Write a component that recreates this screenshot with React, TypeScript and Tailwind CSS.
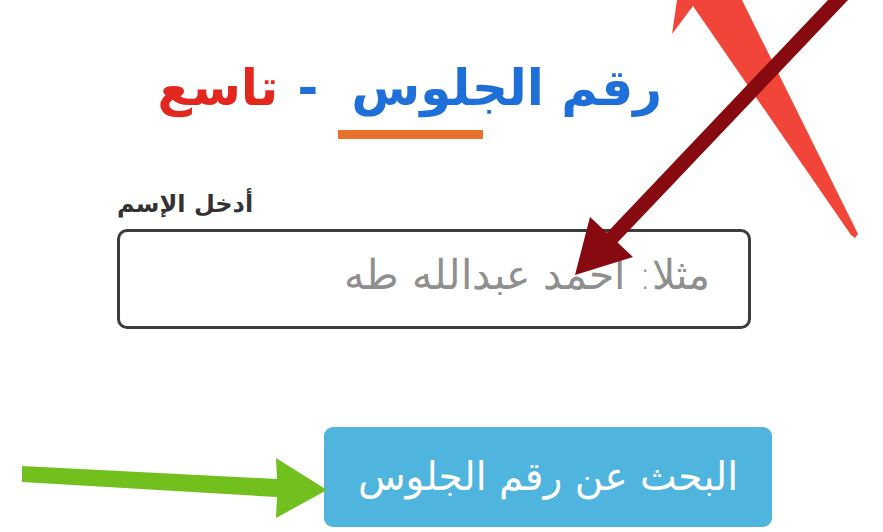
import React from "react";

const font = { fontFamily: '"DejaVu Sans", sans-serif' };

export default function App() {
  return (
    <div
      className="relative w-[883px] h-[532px] overflow-hidden bg-white"
      style={font}
    >
      <div className="flex flex-col">
        {/* Title */}
        <div className="flex justify-end pr-[221px] pt-[56px]">
          <h1
            dir="rtl"
            className="flex items-center text-[50px] font-bold leading-[64px] tracking-[3px]"
          >
            <span className="text-[#1f6fd8]">رقم الجلوس</span>
            <span className="mr-[30px] text-[#1f6fd8]">-</span>
            <span className="mr-[19px] text-[#e2281e]">تاسع</span>
          </h1>
        </div>
        <div className="ml-[338px] mt-[10px] h-[9px] w-[145px] bg-[#e8702a]" />

        {/* Label + input */}
        <div className="ml-[117px] mt-[50px] flex w-[634px] flex-col">
          <label className="text-[24px] font-bold leading-[30px] text-[#333333]">
            أدخل الإسم
          </label>
          <div className="mt-[10px] flex h-[100px] items-center justify-end rounded-[10px] border-[3px] border-[#3c3c3c] pb-[6px] pr-[38px]">
            <span dir="rtl" className="text-[41px] font-light text-[#8f8f8f]">
              مثلا: احمد عبدالله طه
            </span>
          </div>
        </div>

        {/* Button */}
        <div className="ml-[324px] mt-[98px]">
          <button className="flex h-[100px] w-[448px] items-center justify-center rounded-[9px] bg-[#4fb4de] text-[39px] text-white">
            <span dir="rtl">البحث عن رقم الجلوس</span>
          </button>
        </div>
      </div>

      {/* Annotation arrows overlay */}
      <svg
        className="pointer-events-none absolute left-0 top-0"
        width="883"
        height="532"
        viewBox="0 0 883 532"
      >
        <polygon
          points="677,0 742,0 858,234 855,238 851,235 693,6 672,34"
          fill="#f2453a"
        />
        <polygon
          points="828,0 848,0 617.5,242.6 633,257 575,275 590,217 606.9,232.7"
          fill="#860a0f"
        />
        <polygon
          points="22,466 277,479 276,458 327,490 276,518 277,497 22,482"
          fill="#72c01e"
        />
      </svg>
    </div>
  );
}
